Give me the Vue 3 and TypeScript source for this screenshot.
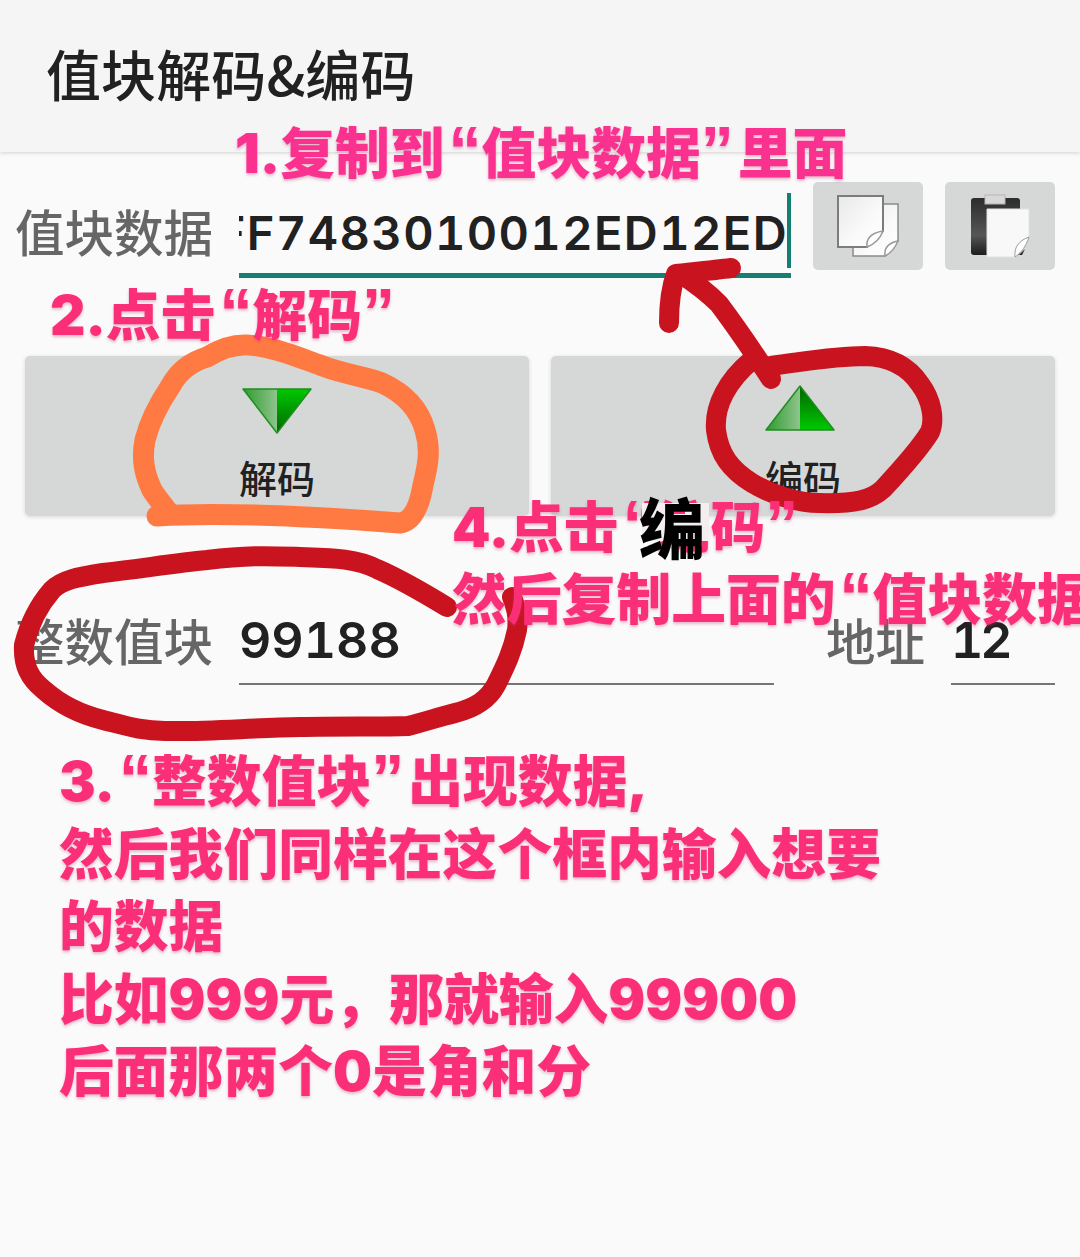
<script setup lang="ts">
const orange = 'M157 516 C220 512 320 517 400 523 C414 521 420 503 423 485 C428 465 431 450 425 430 C420 412 408 395 382 383 C365 376 345 375 320 365 C300 358 270 345 245 345 C230 345 215 352 207 357 C190 362 178 372 170 387 C160 402 150 420 145 440 C141 460 145 475 152 490 C157 498 163 505 170 514'
const arrowHead = 'M669 323 C669 305 670 290 676 274 C695 272 716 270 731 268'
const arrowShaft = 'M681 274 C695 283 707 292 719 304 C731 320 752 350 771 379'
const circle = 'M771 366 C809 361 834 356 865 356 C896 357 912 372 920 384 C932 400 935 420 930 432 C919 450 896 475 883 489 C871 500 855 504 819 503 C798 503 772 495 752 483 C731 470 719 455 716 430 C714 405 728 380 752 360'
const loop = 'M447 607 C424 593 398 578 377 569 C356 558 331 558 300 557 C269 556 248 555 207 560 C176 563 145 568 103 573 C77 577 62 580 52 590 C39 605 29 625 24 645 C23 665 29 678 44 690 C62 706 83 715 103 720 C124 725 139 731 165 731 C207 732 248 728 300 727 C341 726 382 727 408 726 C424 722 439 717 455 713 C475 708 488 700 496 685 C506 665 513 650 517 630 C519 615 515 605 512 597'
</script>

<template>
  <div class="page">
    <header class="bar">值块解码&amp;编码</header>

    <main class="form">
      <section class="row top-row">
        <span class="label">值块数据</span>
        <div class="field focused"><span class="value">FF7483010012ED12ED</span></div>
        <button class="tool">
          <svg width="70" height="70" viewBox="0 0 70 70">
            <defs>
              <linearGradient id="sheet" x1="0" y1="0" x2="1" y2="1">
                <stop offset="0" stop-color="#e8e8e8" />
                <stop offset="0.6" stop-color="#fafafa" />
                <stop offset="1" stop-color="#ffffff" />
              </linearGradient>
            </defs>
            <path d="M20 13 H65 V50 L52 65 H20 Z" fill="url(#sheet)" stroke="#8a8a8a" stroke-width="1.5" />
            <path d="M5 5 H50 V40 L34 56 H5 Z" fill="url(#sheet)" stroke="#7c7c7c" stroke-width="2" />
            <path d="M34 56 C33 48 38 42 50 40 C47 48 42 53 34 56 Z" fill="#fff" stroke="#9a9a9a" stroke-width="1.5" />
            <path d="M52 65 C51 57 55 52 65 50 C62 57 58 62 52 65 Z" fill="#fff" stroke="#9a9a9a" stroke-width="1.5" />
          </svg>
        </button>
        <button class="tool">
          <svg width="70" height="70" viewBox="0 0 70 70">
            <defs>
              <linearGradient id="board" x1="0" y1="0" x2="0" y2="1">
                <stop offset="0" stop-color="#2c2c2c" />
                <stop offset="0.65" stop-color="#565656" />
                <stop offset="1" stop-color="#1c1c1c" />
              </linearGradient>
            </defs>
            <rect x="6" y="7" width="49" height="57" rx="3" fill="url(#board)" />
            <rect x="20" y="4" width="20" height="9" fill="#d8d8d8" stroke="#b5b5b5" />
            <path d="M22 18 H64 V46 L50 66 H22 Z" fill="#f8f8f8" stroke="#e2e2e2" />
            <path d="M50 66 C49 57 53 50 64 46 C61 55 57 61 50 66 Z" fill="#fff" stroke="#9a9a9a" />
            <path d="M54 64 L60 58 L57 64 Z" fill="#222" />
          </svg>
        </button>
      </section>

      <section class="actions">
        <button class="action">
          <svg width="70" height="48" viewBox="0 0 70 48">
            <defs>
              <linearGradient id="leftDown" x1="0" y1="0" x2="1" y2="0">
                <stop offset="0" stop-color="#2f9b2f" />
                <stop offset="1" stop-color="#8ec48c" />
              </linearGradient>
              <linearGradient id="rightDown" x1="0" y1="0" x2="0" y2="1">
                <stop offset="0" stop-color="#00c800" />
                <stop offset="1" stop-color="#006500" />
              </linearGradient>
            </defs>
            <path d="M1 3 H35 V47 Z" fill="url(#leftDown)" />
            <path d="M35 3 H69 L35 47 Z" fill="url(#rightDown)" />
            <path d="M1 3 H69 L35 47 Z" fill="none" stroke="#1f8f1f" stroke-width="1.5" stroke-linejoin="round" />
          </svg>
          <span>解码</span>
        </button>
        <button class="action up">
          <svg width="70" height="48" viewBox="0 0 70 48">
            <defs>
              <linearGradient id="leftUp" x1="0" y1="0" x2="1" y2="0">
                <stop offset="0" stop-color="#2f9b2f" />
                <stop offset="1" stop-color="#8ec48c" />
              </linearGradient>
              <linearGradient id="rightUp" x1="0" y1="0" x2="0" y2="1">
                <stop offset="0" stop-color="#006500" />
                <stop offset="1" stop-color="#00c800" />
              </linearGradient>
            </defs>
            <path d="M1 45 H35 V1 Z" fill="url(#leftUp)" />
            <path d="M35 45 H69 L35 1 Z" fill="url(#rightUp)" />
            <path d="M1 45 H69 L35 1 Z" fill="none" stroke="#1f8f1f" stroke-width="1.5" stroke-linejoin="round" />
          </svg>
          <span>编码</span>
        </button>
      </section>

      <section class="row value-row">
        <span class="label">整数值块</span>
        <div class="field wide"><span class="value">99188</span></div>
        <span class="label addr">地址</span>
        <div class="field narrow"><span class="value">12</span></div>
      </section>
    </main>

    <svg class="ink" width="1080" height="1257" viewBox="0 0 1080 1257" fill="none" stroke-linecap="round" stroke-linejoin="round">
      <path :d="orange" stroke="#ff7a42" stroke-width="21" />
      <path :d="arrowHead" stroke="#c91420" stroke-width="20" />
      <path :d="arrowShaft" stroke="#c91420" stroke-width="20" />
      <path :d="circle" stroke="#c91420" stroke-width="20" />
      <path :d="loop" stroke="#c91420" stroke-width="20" />
    </svg>

    <div class="note n1">1.复制到<span class="q open">“</span>值块数据<span class="q">”</span>里面</div>
    <div class="note n2">2.点击<span class="q open">“</span>解码<span class="q">”</span></div>
    <div class="note n4">4.点击<span class="q open">“</span>编码<span class="q">”</span></div>
    <div class="patch"></div>
    <div class="stamp">编</div>
    <div class="note n5">然后复制上面的<span class="q open">“</span>值块数据<span class="q">”</span></div>
    <div class="note n3">3.<span class="q open">“</span>整数值块<span class="q">”</span>出现数据,<br />然后我们同样在这个框内输入想要<br />的数据<br />比如999元，那就输入99900<br />后面那两个0是角和分</div>
  </div>
</template>

<style scoped>
.page {
  position: relative;
  width: 1080px;
  height: 1257px;
  overflow: hidden;
  background: #fafafa;
  font-family: "Inter", "Noto Sans CJK SC", sans-serif;
  color: #212121;
}
.bar {
  height: 152px;
  box-sizing: border-box;
  padding: 37px 0 0 46px;
  background: #f5f5f5;
  font-family: "Noto Sans CJK SC", sans-serif;
  font-size: 55px;
  font-weight: 500;
  line-height: 70px;
  letter-spacing: 0.1px;
  box-shadow: 0 1px 4px rgba(0, 0, 0, 0.16);
}
.form {
  display: flex;
  flex-direction: column;
}
.row {
  display: flex;
  align-items: flex-start;
}
.top-row {
  height: 174px;
  padding-top: 30px;
  box-sizing: border-box;
}
.label {
  width: 200px;
  margin-left: 15px;
  margin-right: 24px;
  flex: none;
  font-family: "Noto Sans CJK SC", sans-serif;
  font-size: 49.5px;
  font-weight: 500;
  line-height: 60px;
  color: #666666;
  white-space: nowrap;
}
.top-row .label {
  margin-top: 19px;
}
.field {
  box-sizing: border-box;
  overflow: hidden;
  display: flex;
  white-space: nowrap;
  font-size: 50px;
  font-weight: 600;
  line-height: 60px;
  font-variant-numeric: tabular-nums;
}
.field.focused {
  width: 552px;
  height: 85px;
  margin-top: 11px;
  padding: 10px 3px 0 0;
  justify-content: flex-end;
  position: relative;
  font-size: 47px;
  letter-spacing: 1.4px;
  border-bottom: 5px solid #167f74;
}
.field.focused::after {
  content: "";
  position: absolute;
  right: 0;
  top: 0;
  bottom: 5px;
  width: 4px;
  background: #167f74;
}
.tool {
  width: 110px;
  height: 88px;
  margin-left: 22px;
  padding: 0;
  border: 0;
  border-radius: 5px;
  background: #d6d7d7;
  display: flex;
  align-items: center;
  justify-content: center;
  flex: none;
}
.actions {
  display: flex;
  gap: 22px;
  padding: 30px 25px 0;
}
.action {
  width: 504px;
  height: 160px;
  padding: 30px 0 0;
  border: 0;
  border-radius: 5px;
  background: #d6d7d7;
  box-shadow: 0 1px 4px rgba(0, 0, 0, 0.14);
  display: flex;
  flex-direction: column;
  align-items: center;
  gap: 21px;
  color: #212121;
  font-family: "Noto Sans CJK SC", sans-serif;
  font-size: 38px;
  font-weight: 500;
  line-height: 44px;
}
.action.up svg {
  margin-left: -7px;
  margin-top: -1px;
  margin-bottom: 1px;
}
.value-row {
  padding-top: 94px;
}
.wide {
  width: 535px;
  height: 75px;
  border-bottom: 2px solid #757575;
}
.narrow {
  width: 104px;
  height: 75px;
  margin-left: 0;
  border-bottom: 2px solid #757575;
  letter-spacing: -3px;
}
.label.addr {
  width: 100px;
  margin-left: 52px;
  margin-right: 25px;
}
.ink {
  position: absolute;
  left: 0;
  top: 0;
}
.note {
  position: absolute;
  font-family: "Inter", "Noto Sans CJK SC", sans-serif;
  font-size: 54.8px;
  font-weight: 900;
  color: #fb2f78;
  white-space: nowrap;
  line-height: 62px;
  text-shadow: 0 2px 3px rgba(190, 60, 110, 0.35);
}
.q {
  display: inline-block;
  width: 37px;
  text-align: left;
  font-family: "Liberation Sans", sans-serif;
  font-weight: 700;
  font-size: 66px;
  line-height: 50px;
}
.q.open {
  text-align: right;
}
.n1 {
  left: 235px;
  top: 122px;
  color: #fb3190;
}
.n2 {
  left: 50px;
  top: 284px;
}
.n4 {
  left: 452px;
  top: 496px;
}
.n5 {
  left: 452px;
  top: 568px;
}
.n3 {
  left: 59px;
  top: 745px;
  line-height: 72.5px;
}
.patch {
  position: absolute;
  left: 642px;
  top: 503px;
  width: 67px;
  height: 38px;
  background: linear-gradient(#fb2f78, #fb2f78) 31px 7px / 12px 4px no-repeat, #f4eef0;
}
.stamp {
  position: absolute;
  left: 639px;
  top: 485px;
  font-family: "Noto Sans CJK SC", sans-serif;
  font-size: 66px;
  font-weight: 900;
  line-height: 80px;
  color: #000;
}
</style>
<style>
html,
body {
  margin: 0;
  overflow: hidden;
}
</style>
